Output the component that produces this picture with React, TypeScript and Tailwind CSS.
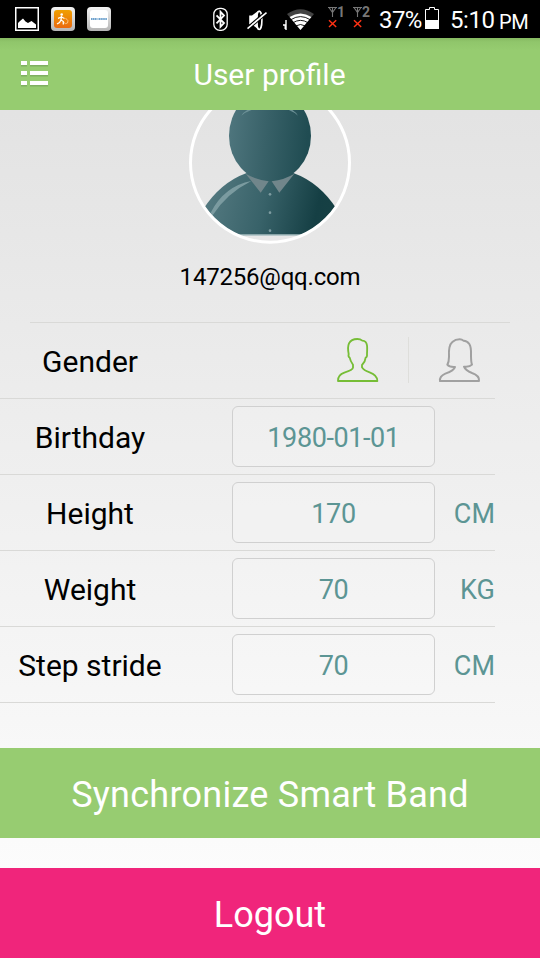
import React from "react";

function GalleryIcon() {
  return (
    <svg className="h-6 w-6" viewBox="0 0 24 24">
      <rect x="0.75" y="0.75" width="22.5" height="22.5" fill="#000" stroke="#fff" strokeWidth="1.5" />
      <path d="M3 21V16L5 14L8 11.5L10.5 14.5L13 16L16.5 14L21 17.5V21Z" fill="#fff" />
    </svg>
  );
}

function RunnerIcon() {
  return (
    <svg className="ml-3 h-6 w-6" viewBox="0 0 24 24">
      <defs>
        <linearGradient id="tile" x1="0" y1="0" x2="0" y2="1">
          <stop offset="0" stopColor="#f3f3f3" />
          <stop offset="1" stopColor="#b5b5b5" />
        </linearGradient>
        <linearGradient id="orange" x1="0" y1="0" x2="0" y2="1">
          <stop offset="0" stopColor="#f0a000" />
          <stop offset="1" stopColor="#ea6a10" />
        </linearGradient>
      </defs>
      <rect width="24" height="24" rx="4" fill="url(#tile)" />
      <rect x="3" y="3" width="18" height="18" rx="3" fill="url(#orange)" />
      <circle cx="10.7" cy="7.5" r="1.3" fill="#fff" />
      <path d="M10.5 9L10 13L12.3 14.5L12.3 17.5M10 13L8.5 15.5L6 17M10.5 10L7 11.3M10.5 10L13.5 11.5" fill="none" stroke="#fff" strokeWidth="1.3" />
      <path d="M14.5 11Q18.5 14 16.5 16Q14.5 17.5 13 15.5" fill="none" stroke="#ffd39a" strokeWidth="0.8" />
    </svg>
  );
}

function BrandIcon() {
  return (
    <svg className="ml-3 h-6 w-6" viewBox="0 0 24 24">
      <rect width="24" height="24" rx="4" fill="url(#tile)" />
      <rect x="3" y="3" width="18" height="18" rx="3" fill="#fff" />
      <path d="M4 12H10.5M11.5 12H20" stroke="#3f83bd" strokeWidth="1.5" strokeDasharray="1.5 0.4" />
    </svg>
  );
}

function BluetoothIcon() {
  return (
    <svg className="ml-[102px] h-6 w-[15px]" viewBox="0 0 15 24">
      <rect x="0.8" y="1.3" width="13.4" height="22" rx="6" fill="none" stroke="#fff" strokeWidth="1.3" />
      <path d="M3.5 8.3L11 16L7.5 19.8V4.8L11 8.6L3.5 16.4" fill="none" stroke="#fff" strokeWidth="1.8" />
    </svg>
  );
}

function MuteIcon() {
  return (
    <svg className="ml-[19px] h-6 w-5" viewBox="0 0 20 24">
      <path d="M2.2 8.5H5L11 4V22L5 17.5H2.2Z" fill="#fff" />
      <ellipse cx="12.2" cy="13.3" rx="2.7" ry="9.2" fill="#000" stroke="#fff" strokeWidth="1.6" />
      <path d="M9 7L10.8 5V21L9 19Z" fill="#fff" />
      <path d="M0 20.3L18.5 4.6" stroke="#000" strokeWidth="1.3" />
      <path d="M1 22.8L19.5 7" stroke="#000" strokeWidth="1.3" />
      <path d="M0.5 21.6L19.5 5.6" stroke="#fff" strokeWidth="1.6" />
    </svg>
  );
}

function WifiIcon() {
  return (
    <svg className="ml-4 h-6 w-8" viewBox="0 0 32 24">
      <path d="M17.5 23L4 7Q17.5 -2.6 31 7Z" fill="#424242" />
      <path d="M17.5 23L6.6 10Q17.5 3 28.4 10Z" fill="#fff" />
      <path d="M8 12.6Q17.5 6.6 27 12.6M10 15.7Q17.5 11 25 15.7M12.5 19Q17.5 16 22.5 19" fill="none" stroke="#000" strokeWidth="0.9" />
      <path d="M3 13V23M0 18H2.2V22" fill="none" stroke="#fff" strokeWidth="1.4" />
    </svg>
  );
}

function SignalIcon({ sim }: { sim: string }) {
  return (
    <div className="relative h-6 w-[17px]">
      <svg className="h-6 w-[17px]" viewBox="0 0 17 24">
        <path d="M0 0.5H9M4.5 0.5V10M1 0.5L4.5 5.5L8 0.5" fill="none" stroke="#777" strokeWidth="1.1" />
        <path d="M1 13.3L8.2 20M8.2 13.3L1 20" stroke="#ff3214" strokeWidth="1.5" />
      </svg>
      <span className="absolute -top-[4px] left-[9px] text-[14px] leading-[18px] font-bold text-[#777]">{sim}</span>
    </div>
  );
}

function BatteryIcon() {
  return (
    <svg className="ml-[4px] h-6 w-[14px]" viewBox="0 0 14 24">
      <path d="M0.5 2.5H4.5V0.5H9.5V2.5H13.5V21.5H0.5Z" fill="none" stroke="#fff" />
      <rect y="13" width="14" height="9" fill="#fff" />
    </svg>
  );
}

function StatusBar() {
  return (
    <div className="flex h-[38px] items-center bg-black pl-[15px] text-white">
      <GalleryIcon />
      <RunnerIcon />
      <BrandIcon />
      <BluetoothIcon />
      <MuteIcon />
      <WifiIcon />
      <div className="ml-[13px] flex gap-2">
        <SignalIcon sim="1" />
        <SignalIcon sim="2" />
      </div>
      <span className="ml-[9px] w-[42px] pt-0.5 text-2xl tracking-[-0.6px] whitespace-nowrap">37%</span>
      <BatteryIcon />
      <span className="ml-[11px] w-[51px] pt-0.5 text-2xl tracking-[-0.4px] whitespace-nowrap">5:10</span>
      <span className="mt-[5px] -ml-0.5 text-[20px] tracking-[-0.3px] whitespace-nowrap">PM</span>
    </div>
  );
}

function Header() {
  return (
    <header className="flex h-[72px] items-center bg-[linear-gradient(#86ba62_0,#90c66b_4px,#96cc70_12px)] text-white">
      <svg className="ml-[21px] h-[26px] w-[27px]" viewBox="0 0 27 26">
        <path d="M0 3.6H6M9 3.6H27M0 13.6H6M9 13.6H27M0 23.6H6M9 23.6H27" stroke="#7fb060" strokeWidth="4" />
        <path d="M0 2H6M9 2H27M0 12H6M9 12H27M0 22H6M9 22H27" stroke="#fff" strokeWidth="4" />
      </svg>
      <h1 className="mr-[49px] flex-1 text-center text-[30px]">User profile</h1>
    </header>
  );
}

function Avatar() {
  return (
    <svg className="mx-auto block h-[135px] w-[164px]" viewBox="24 30 492 405">
      <defs>
        <linearGradient id="head" x1="0" x2="1" y1="0" y2="0.1">
          <stop offset="0" stopColor="#50777f" />
          <stop offset="0.5" stopColor="#386168" />
          <stop offset="1" stopColor="#204c52" />
        </linearGradient>
        <linearGradient id="body" x1="0" x2="1" y1="0" y2="0.1">
          <stop offset="0" stopColor="#587d84" />
          <stop offset="0.5" stopColor="#386269" />
          <stop offset="0.9" stopColor="#153f44" />
          <stop offset="1" stopColor="#164044" />
        </linearGradient>
        <clipPath id="disc">
          <circle cx="270" cy="188" r="236" />
        </clipPath>
      </defs>
      <g clipPath="url(#disc)">
        <path d="M68 330Q120 248 200 219H340Q420 248 472 330L460 405H80Z" fill="url(#body)" />
        <path d="M92 338Q133 258 214 243Q140 280 98 346Z" fill="#7b9ba0" />
        <path d="M90 405H450" stroke="#a8bfc2" strokeWidth="4" />
        <ellipse cx="270" cy="107" rx="123" ry="137" fill="url(#head)" />
        <path d="M184 47Q192 34 208 27L224 27Q199 34 184 47ZM354 47Q346 34 332 27L318 27Q340 34 354 47Z" fill="#6d9197" />
        <path d="M197 221Q228 239 266 244L242 278ZM343 221Q314 239 275 244L298 278Z" fill="#71868b" />
        <g fill="#7e9ca1">
          <circle cx="270" cy="283" r="4" />
          <circle cx="270" cy="338" r="4" />
          <circle cx="270" cy="392" r="4" />
        </g>
      </g>
      <circle cx="270" cy="188" r="238.5" fill="none" stroke="#fff" strokeWidth="9" />
    </svg>
  );
}

function MaleIcon() {
  return (
    <svg className="h-[50px] w-[45px]" viewBox="45 60 135 150" fill="none" stroke="#76bd36" strokeWidth="5.5" strokeLinejoin="round">
      <path d="M54 198Q53 180 73 173Q98 165 99 158V149Q91 138 89 128Q84 126 86 117Q82 96 87 85C92 75 102 72 112 72Q121 72 127 77Q139 78 141 91Q142 98 141 116Q142 127 137 128Q136 140 126 150V157Q131 166 149 172Q172 180 172 198Z" />
    </svg>
  );
}

function FemaleIcon() {
  return (
    <svg className="h-[50px] w-[45px]" viewBox="351 60 135 150" fill="none" stroke="#a0a0a0" strokeWidth="6" strokeLinejoin="round">
      <path d="M360 198Q358 184 376 176Q402 167 405 156Q388 157 382 149Q387 140 387 125Q385 91 397 81Q406 73 419 73Q426 73 430 77Q440 76 448 87Q454 96 453 120Q453 142 456 149Q449 157 432 155Q436 166 456 174Q479 182 477 198Z" />
    </svg>
  );
}

function Label({ children }: { children: React.ReactNode }) {
  return <span className="w-[180px] pt-0.5 text-center text-[30px] whitespace-nowrap text-black">{children}</span>;
}

function GenderRow() {
  return (
    <div className="flex h-[76px] w-[495px] items-center border-b border-[#d9d9d7]">
      <Label>Gender</Label>
      <div className="ml-[155px] flex items-center pb-[2px]">
        <MaleIcon />
        <div className="ml-7 h-[46px] w-px bg-[#dededb]" />
        <div className="ml-7">
          <FemaleIcon />
        </div>
      </div>
    </div>
  );
}

function FieldRow({ label, value, unit }: { label: string; value: string; unit?: string }) {
  return (
    <div className="flex h-[76px] w-[495px] items-center border-b border-[#d9d9d7]">
      <Label>{label}</Label>
      <div className="ml-[52px] flex h-[61px] w-[203px] items-center justify-center rounded-md border border-[#d0d0d0] bg-white/10 pt-1 text-[27px] tracking-[-0.4px] text-[#5c9594]">
        {value}
      </div>
      <span className="flex-1 pt-1 text-right text-[27px] text-[#5c9594]">{unit}</span>
    </div>
  );
}

export default function App() {
  return (
    <div className="flex h-[960px] w-[540px] flex-col overflow-hidden bg-white font-[Roboto,sans-serif]">
      <StatusBar />
      <Header />
      <main className="flex flex-1 flex-col bg-linear-to-b from-[#e3e3e3] to-white">
        <Avatar />
        <p className="mt-3 h-10 text-center text-2xl leading-10 tracking-[-0.2px] text-black">147256@qq.com</p>
        <div className="mx-[30px] mt-[25px] h-px bg-[#d9d9d7]" />
        <GenderRow />
        <FieldRow label="Birthday" value="1980-01-01" />
        <FieldRow label="Height" value="170" unit="CM" />
        <FieldRow label="Weight" value="70" unit="KG" />
        <FieldRow label="Step stride" value="70" unit="CM" />
        <button className="mt-[45px] h-[90px] bg-[#97cc71] pt-1 text-4xl tracking-[0.25px] text-white">Synchronize Smart Band</button>
        <button className="mt-[30px] h-[90px] bg-[#f0257b] pt-1 text-4xl text-white">Logout</button>
      </main>
    </div>
  );
}
